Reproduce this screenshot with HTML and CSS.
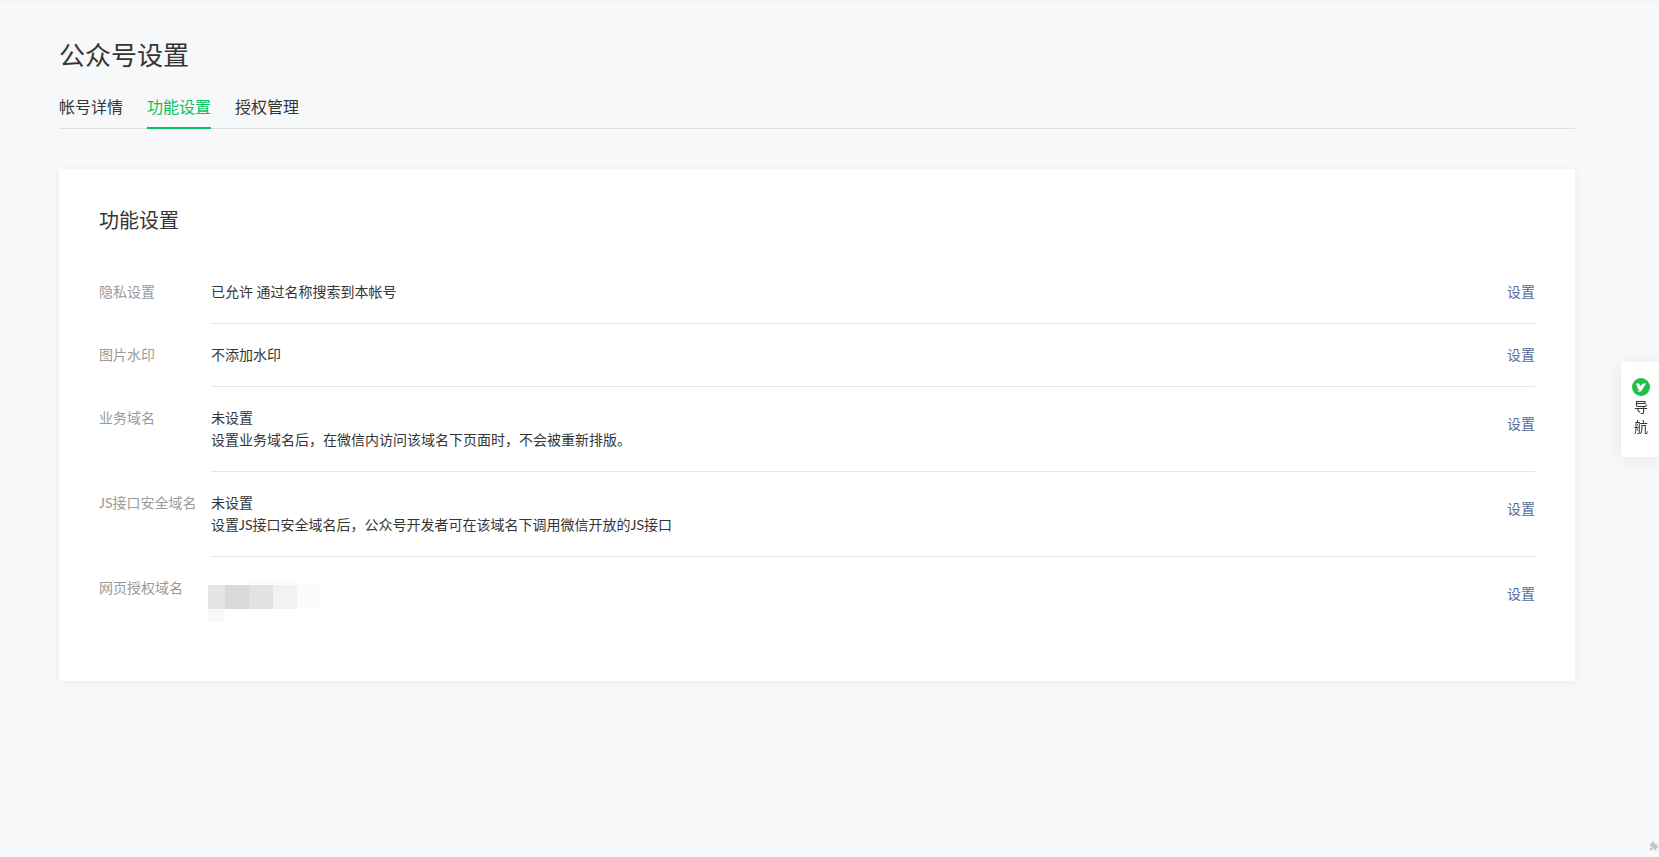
FILE: index.html
```
<!DOCTYPE html>
<html lang="zh-CN">
<head>
    <meta charset="UTF-8">
    <meta name="viewport" content="width=device-width, initial-scale=1.0">
    <title>公众号设置</title>
    <link rel="stylesheet" href="styles.css">
</head>
<body>

    <main class="page">
        <h1>公众号设置</h1>

        <!-- 顶部标签 -->
        <nav class="tabs">
            <a href="#detail">帐号详情</a>
            <a href="#function" class="current">功能设置</a>
            <a href="#auth">授权管理</a>
        </nav>

        <section class="panel" id="function">
            <h2>功能设置</h2>

            <ul class="setting-list">
                <li class="setting">
                    <span class="label">隐私设置</span>
                    <div class="content">
                        <p>已允许 通过名称搜索到本帐号</p>
                        <a href="#privacy" class="opr">设置</a>
                    </div>
                </li>
                <li class="setting">
                    <span class="label">图片水印</span>
                    <div class="content">
                        <p>不添加水印</p>
                        <a href="#watermark" class="opr">设置</a>
                    </div>
                </li>
                <li class="setting setting-domain">
                    <span class="label">业务域名</span>
                    <div class="content">
                        <p>未设置<br>设置业务域名后，在微信内访问该域名下页面时，不会被重新排版。</p>
                        <a href="#business" class="opr">设置</a>
                    </div>
                </li>
                <li class="setting setting-domain">
                    <span class="label">JS接口安全域名</span>
                    <div class="content">
                        <p>未设置<br>设置JS接口安全域名后，公众号开发者可在该域名下调用微信开放的JS接口</p>
                        <a href="#jsapi" class="opr">设置</a>
                    </div>
                </li>
                <li class="setting setting-domain">
                    <span class="label">网页授权域名</span>
                    <div class="content">
                        <!-- 域名打码 -->
                        <svg class="mosaic" width="113" height="45" viewBox="0 0 113 45" shape-rendering="crispEdges" aria-hidden="true">
                            <rect x="41" y="4" width="48" height="4" fill="#fcfcfc"/>
                            <rect x="0" y="8" width="17" height="24" fill="#e5e5e3"/>
                            <rect x="17" y="8" width="24" height="24" fill="#d9d9d9"/>
                            <rect x="41" y="8" width="24" height="24" fill="#e3e2e0"/>
                            <rect x="65" y="8" width="24" height="24" fill="#f2f2f2"/>
                            <rect x="89" y="8" width="24" height="24" fill="#fafbfd"/>
                            <rect x="0" y="32" width="17" height="13" fill="#f9f9f9"/>
                        </svg>
                        <a href="#oauth" class="opr">设置</a>
                    </div>
                </li>
            </ul>
        </section>
    </main>

    <!-- 右侧悬浮导航 -->
    <button type="button" class="side-nav">
        <svg width="18" height="18" viewBox="0 0 18 18" aria-hidden="true">
            <circle cx="9" cy="9" r="9" fill="#22bf47"/>
            <path d="M4 5.500h2.600q.8 0 1 .8l.5 1.900 2-2.100q.6-.6 1.300-.6H14L9.500 12.800q-.6.700-1.300.7H5.500l2-2.600H6.800q-.9 0-1.200-.9z" fill="#fff"/>
        </svg>
        <span>导</span>
        <span>航</span>
    </button>

    <svg class="plugin" width="10" height="10" viewBox="0 0 10 10" aria-hidden="true">
        <path d="M1 2.500h2.200C2.600 1.200 3.200.3 4.100.3s1.500.9.9 2.200h2.500v2.100c1.100-.5 2 0 2 .9s-.9 1.400-2 .9v2.900H5.300c.4-1.100-.1-1.900-1.100-1.900s-1.500.8-1.100 1.900H.9V7c1.100.3 1.700-.2 1.700-1s-.6-1.300-1.700-1z" fill="#c4c4c4"/>
    </svg>

</body>
</html>
```
FILE: styles.css
```
body {
    margin: 0;
    background: #f6f8f9 linear-gradient(#f3f4f5, #f6f8f9) no-repeat 0 0 / 100% 5px;
    color: #353535;
    font-family: Lato, "Noto Sans CJK SC", sans-serif;
    font-size: 14px;
    line-height: 22px;
}
h1, h2, p, ul {
    margin: 0;
    padding: 0;
    font-weight: 400;
}
a {
    text-decoration: none;
}
.page {
    padding: 37px 84px 40px 59px;
}
h1 {
    font-size: 26px;
    line-height: 36px;
}

/* 标签 */
.tabs {
    display: flex;
    gap: 24px;
    margin-top: 19px;
    border-bottom: 1px solid #e0e1e2;
}
.tabs a {
    height: 35px;
    margin-bottom: -1px;
    border-bottom: 2px solid transparent;
    color: #353535;
    font-size: 16px;
    line-height: 30px;
}
.tabs .current {
    border-color: #07c160;
    color: #07c160;
}

/* 设置面板 */
.panel {
    margin-top: 40px;
    padding: 36px 40px 39px;
    border-radius: 2px;
    background-color: #fff;
    box-shadow: 0 1px 10px rgba(0, 0, 0, 0.05);
}
h2 {
    font-size: 20px;
    line-height: 30px;
}
.setting-list {
    margin-top: 26px;
    list-style: none;
}
.setting {
    display: flex;
}
.label {
    width: 112px;
    padding-top: 20px;
    color: #9a9a9a;
}
.content {
    display: flex;
    flex: 1;
    justify-content: space-between;
    padding: 20px 0;
    border-bottom: 1px solid #e4e5e7;
}
.setting:last-child .content {
    border-bottom: none;
}
.opr {
    color: #576b95;
}
.setting-domain .opr {
    padding-top: 6px;
}
.mosaic {
    margin-left: -3px;
}

/* 悬浮导航 */
.side-nav {
    position: fixed;
    top: 362px;
    right: 0;
    display: flex;
    flex-direction: column;
    align-items: center;
    width: 38px;
    padding: 16px 0 20px 2px;
    border: none;
    border-radius: 2px 0 0 2px;
    background-color: #fff;
    box-shadow: 0 2px 16px rgba(0, 0, 0, 0.08);
    color: #353535;
    font-family: inherit;
    font-size: 14px;
    line-height: 20px;
    cursor: pointer;
}
.side-nav svg {
    margin-bottom: 1px;
}
.plugin {
    position: fixed;
    right: 0;
    bottom: 6px;
}
```
